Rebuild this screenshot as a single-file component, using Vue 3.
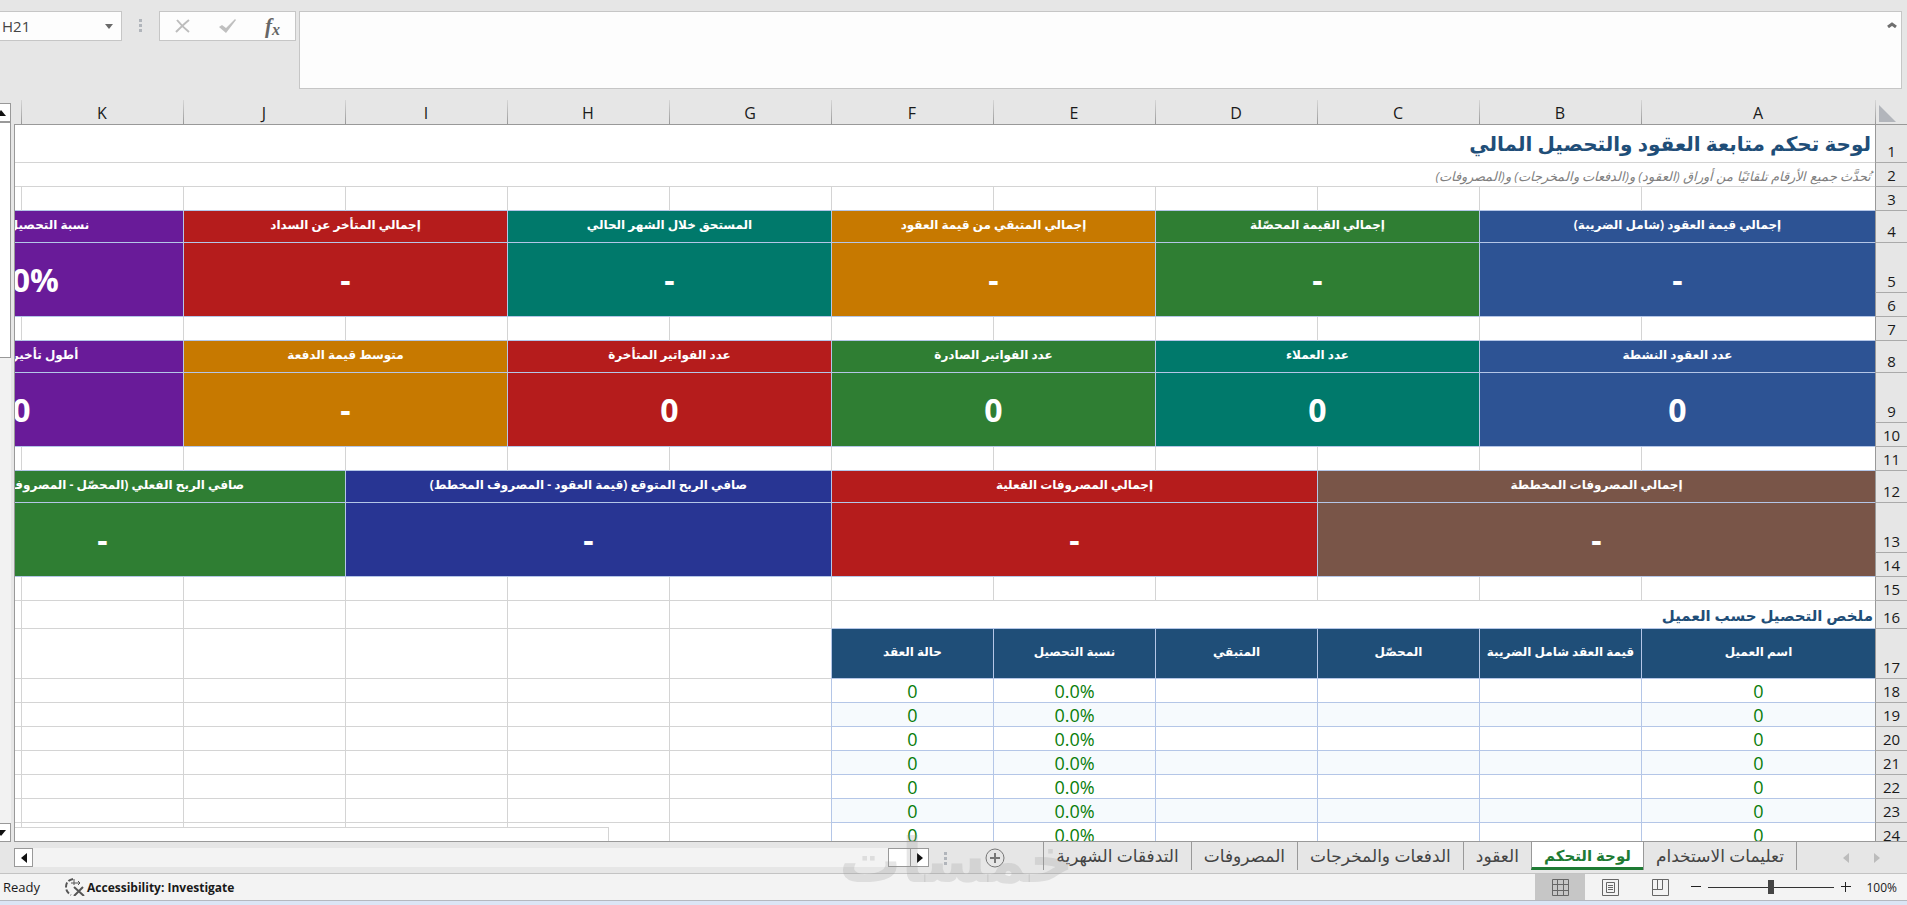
<template>
  <div class="app">
    <header class="formula-bar">
      <div class="name-box">
        <input v-model="activeCell" type="text" aria-label="Name Box" class="name-input" />
        <button type="button" class="name-toggle" aria-label="Open name list">
          <svg width="8" height="5" viewBox="0 0 8 5"><path d="M0 0h8L4 5z" fill="#6a6a6a" /></svg>
        </button>
      </div>
      <span class="grip"><i></i><i></i><i></i></span>
      <div class="formula-actions">
        <button type="button" aria-label="Cancel">
          <svg width="16" height="14" viewBox="0 0 16 14" fill="none" stroke="#bdbdbd" stroke-width="2">
            <path d="M2 1c4 5 7 8 12 12M14 1C9 5 5 9 1 13" />
          </svg>
        </button>
        <button type="button" aria-label="Enter">
          <svg width="18" height="14" viewBox="0 0 18 14">
            <path d="M0 8l3-2 4 3L16 0l1 1L7 14z" fill="#c0c0c0" />
          </svg>
        </button>
        <button type="button" aria-label="Insert Function" class="fx"><span>f<sub>x</sub></span></button>
      </div>
      <div class="formula-field">
        <textarea v-model="formula" aria-label="Formula Bar"></textarea>
        <button type="button" class="collapse" aria-label="Collapse Formula Bar">
          <svg width="10" height="6" viewBox="0 0 10 6" fill="none" stroke="#6f6f6f" stroke-width="3">
            <path d="M1 5l4-3 4 3" />
          </svg>
        </button>
      </div>
    </header>

    <main class="workspace">
      <div class="v-scroll">
        <button type="button" aria-label="Scroll up">
          <svg width="10" height="6" viewBox="0 0 10 6"><path d="M5 0l5 6H0z" fill="#111" /></svg>
        </button>
        <div class="v-thumb"></div>
        <button type="button" aria-label="Scroll down" class="v-down">
          <svg width="10" height="6" viewBox="0 0 10 6"><path d="M0 0h10L5 6z" fill="#111" /></svg>
        </button>
      </div>

      <div class="sheet" dir="rtl">
        <table>
          <colgroup>
            <col class="col-index" />
            <col class="col-first" />
            <col v-for="letter in letters.slice(1)" :key="letter" />
          </colgroup>
          <thead>
            <tr>
              <th class="corner">
                <svg width="17" height="17" viewBox="0 0 17 17"><path d="M0 0v17h17z" fill="#b2b5bb" /></svg>
              </th>
              <th v-for="letter in letters" :key="letter" scope="col">{{ letter }}</th>
            </tr>
          </thead>
          <tbody>
            <tr v-for="(row, i) in rows" :key="i" :style="{ height: row.height + 'px' }">
              <th scope="row">{{ i + 1 }}</th>
              <td
                v-for="(cell, j) in row.cells"
                :key="j"
                :colspan="cell.span || 1"
                :rowspan="cell.rowspan || 1"
                :class="cell.kind"
              >{{ cell.text }}</td>
            </tr>
          </tbody>
        </table>
        <div class="hint-box"></div>
      </div>
    </main>

    <footer>
      <div class="tab-bar" dir="rtl">
        <div class="tab-nav">
          <button type="button" aria-label="Previous sheet">
            <svg width="6" height="10" viewBox="0 0 6 10"><path d="M0 0l6 5-6 5z" fill="#bcbcbc" /></svg>
          </button>
          <button type="button" aria-label="Next sheet">
            <svg width="6" height="10" viewBox="0 0 6 10"><path d="M6 0L0 5l6 5z" fill="#bcbcbc" /></svg>
          </button>
        </div>
        <nav class="tabs">
          <button
            v-for="tab in tabs"
            :key="tab"
            type="button"
            :class="{ active: tab === activeTab }"
            @click="activeTab = tab"
          >{{ tab }}</button>
        </nav>
        <button type="button" class="add-sheet" aria-label="New sheet">
          <svg width="20" height="20" viewBox="0 0 20 20" fill="none" stroke="#777">
            <circle cx="10" cy="10" r="9" />
            <path d="M10 5v10M5 10h10" stroke-width="2" />
          </svg>
        </button>
        <span class="grip tab-grip"><i></i><i></i><i></i></span>
        <div class="h-scroll" dir="ltr">
          <button type="button" aria-label="Scroll left">
            <svg width="6" height="10" viewBox="0 0 6 10"><path d="M6 0L0 5l6 5z" fill="#111" /></svg>
          </button>
          <div class="h-thumb"></div>
          <button type="button" aria-label="Scroll right">
            <svg width="6" height="10" viewBox="0 0 6 10"><path d="M0 0l6 5-6 5z" fill="#111" /></svg>
          </button>
        </div>
      </div>

      <div class="status-bar">
        <span>Ready</span>
        <button type="button" class="accessibility">
          <svg width="20" height="18" viewBox="0 0 20 18" fill="none" stroke="#555" stroke-width="2">
            <path d="M8 1C3 2 1 5 1 9s2 6 5 8" stroke-dasharray="5 2" />
            <path d="M9 1v6M6 5h9M13 3l2 2-2 2" stroke-width="1" />
            <path d="M9 9l10 9M18 9L9 18" />
          </svg>
          Accessibility: Investigate
        </button>
        <div class="views">
          <button type="button" class="current" aria-label="Normal">
            <svg width="17" height="17" viewBox="0 0 17 17" fill="none" stroke="#666">
              <path d="M.5.5h16v16H.5zM5.500 1v15M11.500 1v15M1 5.500h15M1 11.500h15" />
            </svg>
          </button>
          <button type="button" aria-label="Page Layout">
            <svg width="17" height="17" viewBox="0 0 17 17" fill="none" stroke="#666">
              <path d="M.5.5h16v16H.5zM4.500 3.500h8v10h-8zM6 6.500h5M6 8.500h5M6 10.500h5" />
            </svg>
          </button>
          <button type="button" aria-label="Page Break Preview">
            <svg width="17" height="17" viewBox="0 0 17 17" fill="none" stroke="#666">
              <path d="M.5.5h16v16H.5zM.5 10.500h10V.5M5.500 .5v10" />
            </svg>
          </button>
        </div>
        <div class="zoom">
          <button type="button" aria-label="Zoom out">
            <svg width="10" height="10" viewBox="0 0 10 10"><path d="M0 4h10v1H0z" fill="#222" /></svg>
          </button>
          <input v-model="zoom" type="range" min="0" max="200" aria-label="Zoom" />
          <button type="button" aria-label="Zoom in">
            <svg width="10" height="10" viewBox="0 0 10 10"><path d="M0 4h10v1H0zM4 0h1v10H4z" fill="#222" /></svg>
          </button>
          <span class="zoom-value">{{ zoom }}%</span>
        </div>
      </div>
      <div class="watermark" dir="rtl">خمسات</div>
    </footer>
  </div>
</template>

<script setup>
import { ref } from 'vue';

const activeCell = ref('H21');
const formula = ref('');
const zoom = ref(100);
const activeTab = ref('لوحة التحكم');

const letters = 'ABCDEFGHIJKL'.split('');

const tabs = [
  'تعليمات الاستخدام',
  'لوحة التحكم',
  'العقود',
  'الدفعات والمخرجات',
  'المصروفات',
  'التدفقات الشهرية',
];

const bands = [
  [
    { label: 'إجمالي قيمة العقود (شامل الضريبة)', value: '-', color: 'blue', span: 2 },
    { label: 'إجمالي القيمة المحصّلة', value: '-', color: 'green', span: 2 },
    { label: 'إجمالي المتبقي من قيمة العقود', value: '-', color: 'orange', span: 2 },
    { label: 'المستحق خلال الشهر الحالي', value: '-', color: 'teal', span: 2 },
    { label: 'إجمالي المتأخر عن السداد', value: '-', color: 'red', span: 2 },
    { label: 'نسبة التحصيل الإجمالية', value: '0.0%', color: 'purple', span: 2 },
  ],
  [
    { label: 'عدد العقود النشطة', value: '0', color: 'blue', span: 2 },
    { label: 'عدد العملاء', value: '0', color: 'teal', span: 2 },
    { label: 'عدد الفواتير الصادرة', value: '0', color: 'green', span: 2 },
    { label: 'عدد الفواتير المتأخرة', value: '0', color: 'red', span: 2 },
    { label: 'متوسط قيمة الدفعة', value: '-', color: 'orange', span: 2 },
    { label: 'أطول تأخير (بالأيام)', value: '0', color: 'purple', span: 2 },
  ],
  [
    { label: 'إجمالي المصروفات المخططة', value: '-', color: 'brown', span: 3 },
    { label: 'إجمالي المصروفات الفعلية', value: '-', color: 'red', span: 3 },
    { label: 'صافي الربح المتوقع (قيمة العقود - المصروف المخطط)', value: '-', color: 'indigo', span: 3 },
    { label: 'صافي الربح الفعلي (المحصّل - المصروف الفعلي)', value: '-', color: 'green', span: 3 },
  ],
];

const headings = ['اسم العميل', 'قيمة العقد شامل الضريبة', 'المحصّل', 'المتبقي', 'نسبة التحصيل', 'حالة العقد'];

function blanks(count, kind = '') {
  return Array.from({ length: count }, () => ({ kind }));
}

// each KPI band takes a spacer, a label row and two merged value rows
function bandRows(band) {
  return [
    { height: 24, cells: blanks(12, 'above-kpi') },
    { height: 32, cells: band.map((k) => ({ text: k.label, span: k.span, kind: ['kpi', 'kpi-label', k.color] })) },
    {
      height: 50,
      cells: band.map((k) => ({ text: k.value, span: k.span, rowspan: 2, kind: ['kpi', 'kpi-value', k.color] })),
    },
    { height: 24, cells: [] },
  ];
}

const clientRows = Array.from({ length: 7 }, (_, i) => {
  const kind = ['client', { striped: i % 2 === 1 }];
  return {
    height: 24,
    cells: [...['0', '', '', '', '0.0%', '0'].map((text) => ({ text, kind })), ...blanks(6)],
  };
});

const rows = [
  { height: 38, cells: [{ text: 'لوحة تحكم متابعة العقود والتحصيل المالي', span: 12, kind: 'title' }] },
  {
    height: 24,
    cells: [
      {
        text: 'تُحدَّث جميع الأرقام تلقائيًا من أوراق (العقود) و(الدفعات والمخرجات) و(المصروفات)',
        span: 12,
        kind: 'subtitle',
      },
    ],
  },
  ...bands.flatMap(bandRows),
  { height: 24, cells: blanks(12) },
  { height: 28, cells: [{ text: 'ملخص التحصيل حسب العميل', span: 6, kind: 'section' }, ...blanks(6)] },
  { height: 50, cells: [...headings.map((text) => ({ text, kind: 'heading' })), ...blanks(6)] },
  ...clientRows,
];
</script>

<style>
body {
  margin: 0;
}
</style>

<style scoped>
.app {
  display: flex;
  flex-direction: column;
  height: 100vh;
  overflow: hidden;
  background: #e6e6e6;
  color: #1a1a1a;
  font-family: "Open Sans", "DejaVu Sans", sans-serif;
}

button {
  display: flex;
  align-items: center;
  justify-content: center;
  padding: 0;
  border: 0;
  background: none;
  color: inherit;
  font: inherit;
}

/* formula bar */
.formula-bar {
  display: flex;
  align-items: flex-start;
  padding: 11px 5px 11px 0;
}

.name-box,
.formula-actions,
.formula-field {
  display: flex;
  box-sizing: border-box;
  height: 30px;
  border: 1px solid #c6c6c6;
  background: #fdfdfd;
}

.name-box {
  width: 122px;
  border-left: 0;
}

.name-input {
  flex: 1;
  min-width: 0;
  padding: 0 0 0 2px;
  border: 0;
  background: none;
  color: #444;
  font: 15px "Open Sans", sans-serif;
}

.name-toggle {
  width: 24px;
}

.grip {
  display: flex;
  flex-direction: column;
  gap: 2px;
}

.grip i {
  width: 3px;
  height: 3px;
  background: #b1b5bb;
}

.formula-bar .grip {
  margin: 8px 17px;
}

.formula-actions {
  width: 137px;
}

.formula-actions button {
  flex: 1;
}

.formula-actions .fx {
  color: #666;
  font: italic bold 21px/24px "Liberation Serif", serif;
}

.fx sub {
  font-size: 16px;
  line-height: 10px;
  vertical-align: -2px;
}

.formula-field {
  flex: 1;
  align-items: flex-start;
  height: 78px;
  margin-left: 3px;
}

.formula-field textarea {
  flex: 1;
  box-sizing: border-box;
  height: 100%;
  border: 0;
  background: none;
  resize: none;
}

.collapse {
  width: 18px;
  height: 26px;
}

/* worksheet */
.workspace {
  display: flex;
  flex: 1;
  gap: 3px;
  min-height: 0;
}

.v-scroll {
  display: flex;
  flex-direction: column;
  box-sizing: border-box;
  width: 11px;
  margin-top: 3px;
  background: #f2f2f2;
}

.v-scroll button,
.v-thumb {
  box-sizing: border-box;
  border: 1px solid #999;
  border-left: 0;
  background: #fff;
}

.v-scroll button {
  width: 11px;
  height: 19px;
  padding-right: 8px;
}

.v-scroll svg {
  flex: none;
}

.v-thumb {
  height: 32%;
}

.v-scroll .v-down {
  margin-top: auto;
}

.sheet {
  position: relative;
  flex: 1;
  min-width: 0;
  overflow: hidden;
  border-bottom: 1px solid #999;
}

.sheet::before {
  content: "";
  position: absolute;
  top: 24px;
  bottom: 0;
  left: 0;
  width: 1px;
  background: #999;
}

table {
  width: 2048px;
  border-spacing: 0;
  table-layout: fixed;
}

col {
  width: 162px;
}

.col-index {
  width: 32px;
}

.col-first {
  width: 234px;
}

th,
td {
  box-sizing: border-box;
  padding: 0;
  overflow: hidden;
  white-space: nowrap;
}

thead th {
  height: 25px;
  padding-top: 2px;
  border-bottom: 1px solid #999;
  background: linear-gradient(#d6d6d6, #999) left bottom / 1px 24px no-repeat;
  font-size: 16px;
  font-weight: 400;
  line-height: 22px;
}

.corner svg {
  display: block;
  margin-right: 11px;
}

tbody th {
  border-bottom: 1px solid #aaa;
  border-left: 1px solid #999;
  background: #e6e6e6;
  font-size: 15px;
  font-weight: 400;
  line-height: 21px;
  vertical-align: bottom;
}

td {
  border-bottom: 1px solid #d4d4d4;
  border-left: 1px solid #d4d4d4;
  background: #fff;
  text-align: center;
}

.above-kpi,
.kpi,
.section {
  border-bottom-color: #b4c6e7;
}

.title,
.subtitle,
.section {
  padding-right: 4px;
  color: #1f4e78;
  text-align: right;
}

.title {
  font-size: 20px;
  font-weight: 700;
  line-height: 36px;
}

.subtitle {
  padding-top: 2px;
  color: #7f7f7f;
  font-size: 13px;
  font-style: italic;
  line-height: 20px;
}

.section {
  padding-right: 2px;
  font-size: 15px;
  font-weight: 700;
  line-height: 26px;
}

.kpi {
  border-left-color: #b4c6e7;
  color: #fff;
  font-weight: 700;
}

.kpi-label,
.heading {
  padding-bottom: 4px;
  font-size: 12px;
  line-height: 26px;
}

.kpi-value {
  font-size: 32px;
  line-height: 40px;
}

.blue {
  background: #2d5394;
}

.green {
  background: #2f7e33;
}

.orange {
  background: #c77900;
}

.teal {
  background: #00796b;
}

.red {
  background: #b51c1c;
}

.purple {
  background: #691b99;
}

.brown {
  background: #795548;
}

.indigo {
  background: #283593;
}

.heading {
  border-color: #b4c6e7;
  background: #1f4e78;
  color: #fff;
  font-weight: 700;
}

.client {
  border-color: #b4c6e7;
  color: #0a7d0a;
  font-size: 18px;
  line-height: 22px;
}

.striped {
  background: #f6fafd;
}

.hint-box {
  position: absolute;
  bottom: 0;
  left: 1px;
  box-sizing: border-box;
  width: 594px;
  height: 14px;
  border: 1px solid #d4d4d4;
  border-width: 1px 1px 0 0;
  background: #fff;
}

/* sheet tabs */
footer {
  position: relative;
}

.tab-bar {
  display: flex;
  align-items: flex-start;
  height: 31px;
  border-bottom: 1px solid #c3c3c3;
}

.tab-nav {
  display: flex;
  gap: 25px;
  margin: 11px 27px 0 46px;
}

.tabs {
  display: flex;
}

.tabs button {
  height: 28px;
  padding: 0 12px;
  border-left: 1px solid #999;
  color: #444;
  font-size: 17px;
  line-height: 28px;
}

.tabs button:first-child {
  border-right: 1px solid #999;
}

.tabs .active {
  border-bottom: 3px solid #1e7b34;
  background: #fff;
  color: #1e7b34;
  font-size: 15px;
  font-weight: 700;
}

.add-sheet {
  margin: 6px 38px 0 0;
}

.tab-grip {
  margin: 10px auto 0 15px;
}

.h-scroll {
  display: flex;
  flex: 0 0 48%;
  box-sizing: border-box;
  height: 19px;
  margin: 6px 0 0 14px;
  background: #f3f3f3;
}

.h-scroll button,
.h-thumb {
  box-sizing: border-box;
  width: 19px;
  border: 1px solid #999;
  background: #fff;
}

.h-thumb {
  width: 22px;
  margin-left: auto;
  border-right: 0;
}

/* status bar */
.status-bar {
  display: flex;
  align-items: center;
  height: 26px;
  padding: 0 10px 0 3px;
  border-bottom: 1px solid #b5b8bf;
  background: #f3f3f3;
  box-shadow: 0 4px 0 #dbe5f5;
  margin-bottom: 4px;
  font-size: 13px;
}

.accessibility {
  gap: 2px;
  margin-left: 25px;
  font-size: 12px;
  font-weight: 700;
}

.views {
  display: flex;
  align-self: stretch;
  margin-left: auto;
}

.views button {
  width: 50px;
}

.views .current {
  background: #c6c6c6;
}

.zoom {
  display: flex;
  align-items: center;
  gap: 7px;
  margin-left: 6px;
}

.zoom input {
  width: 126px;
  height: 16px;
  margin: 0;
  background: linear-gradient(#333, #333) center / 100% 1px no-repeat;
  appearance: none;
}

.zoom input::-webkit-slider-thumb {
  width: 6px;
  height: 14px;
  background: #444;
  appearance: none;
}

.zoom-value {
  margin-left: 8px;
  font-size: 12px;
}

.watermark {
  position: absolute;
  top: -12px;
  left: 44%;
  color: rgba(150, 150, 150, 0.24);
  font: bold 62px/62px "DejaVu Sans", sans-serif;
  pointer-events: none;
}
</style>
